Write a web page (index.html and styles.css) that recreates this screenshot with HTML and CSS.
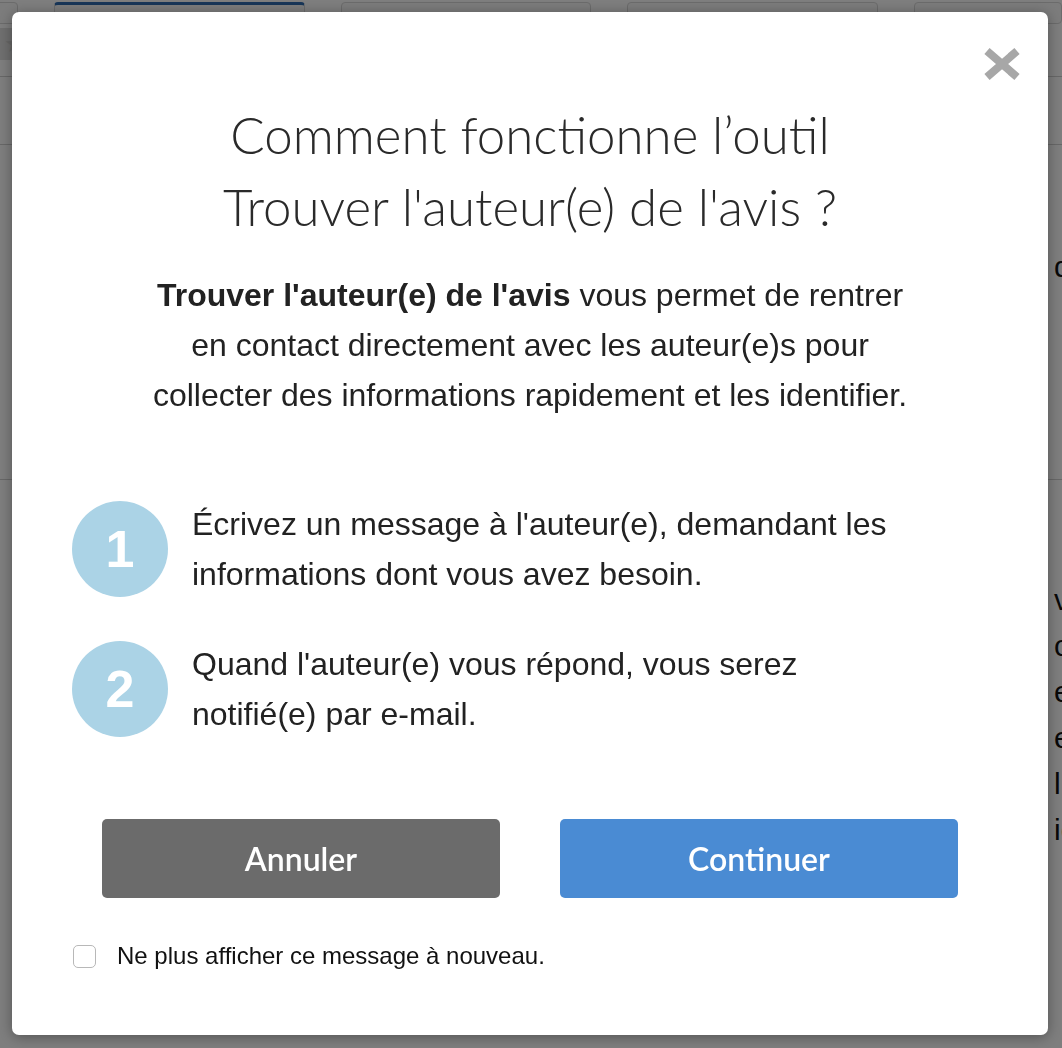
FILE: index.html
```html
<!DOCTYPE html>
<html lang="fr">
<head>
    <meta charset="UTF-8">
    <meta name="viewport" content="width=device-width, initial-scale=1.0">
    <title>Trouver l'auteur(e) de l'avis</title>
    <link rel="stylesheet" href="styles.css">
</head>
<body>
    <!-- page derriere la fenetre -->
    <div class="page">
        <div class="tabs">
            <div class="tab tab-small"></div>
            <div class="tab tab-active"></div>
            <div class="tab"></div>
            <div class="tab"></div>
            <div class="tab tab-small"></div>
        </div>
        <div class="page-row row-top"><span class="star">★</span></div>
        <div class="page-row row-sub"></div>
        <div class="page-row row-mid">
            <p class="side-text side-first">d</p>
        </div>
        <div class="page-row row-bottom">
            <p class="side-text">v</p>
            <p class="side-text">c</p>
            <p class="side-text">e</p>
            <p class="side-text">e</p>
            <p class="side-text">l</p>
            <p class="side-text">io</p>
        </div>
    </div>

    <div class="overlay">
        <div class="modal">
            <button class="close" aria-label="Fermer">
                <svg width="38" height="34" viewBox="0 0 38 34">
                    <path d="M4 4 L34 30 M34 4 L4 30" stroke="#a7a7a7" stroke-width="8" fill="none"/>
                </svg>
            </button>

            <h1 class="modal-title">Comment fonctionne l’outil<br>Trouver l'auteur(e) de l'avis ?</h1>

            <p class="intro">
                <strong>Trouver l'auteur(e) de l'avis</strong> vous permet de rentrer<br>
                en contact directement avec les auteur(e)s pour<br>
                collecter des informations rapidement et les identifier.
            </p>

            <div class="steps">
                <div class="step">
                    <span class="step-num">1</span>
                    <p class="step-text">Écrivez un message à l'auteur(e), demandant les<br>informations dont vous avez besoin.</p>
                </div>
                <div class="step">
                    <span class="step-num">2</span>
                    <p class="step-text">Quand l'auteur(e) vous répond, vous serez<br>notifié(e) par e-mail.</p>
                </div>
            </div>

            <div class="actions">
                <button class="btn btn-cancel">Annuler</button>
                <button class="btn btn-continue">Continuer</button>
            </div>

            <label class="dont-show">
                <input type="checkbox">
                <span>Ne plus afficher ce message à nouveau.</span>
            </label>
        </div>
    </div>
</body>
</html>
```

FILE: styles.css
```css
body {
    margin: 0;
    padding: 0;
    height: 100vh;
    overflow: hidden;
    font-family: "Liberation Sans", Arial, sans-serif;
    background-color: #ffffff;
}

/* Page en arriere-plan */
.page {
    height: 100%;
    background-color: #fdfdfd;
}

.tabs {
    display: flex;
    gap: 36px;
    height: 30px;
    margin-left: -130px;
}

.tab {
    width: 256px;
    height: 20px;
    border: 1px solid #d6d6d6;
    border-radius: 4px;
    margin-top: 2px;
    background-color: #f8f8f8;
}

.tab-small {
    width: 150px;
}

.tab-active {
    border-top: 3px solid #2f6bb0;
}

.page-row {
    border-bottom: 1px solid #cfcfcf;
}

.row-top {
    height: 46px;
}

.star {
    display: inline-block;
    margin-top: -2px;
    font-size: 24px;
    color: #ccc;
    background-color: #dedede;
    padding: 2px 4px;
}

.row-sub {
    height: 67px;
}

.row-mid {
    height: 334px;
    overflow: hidden;
}

.row-bottom {
    border: none;
    padding-top: 97px;
}

.side-text {
    margin: 0 0 0 1054px;
    font-size: 30px;
    line-height: 46px;
    color: #111;
}

.side-first {
    margin-top: 99px;
}

/* Fenetre modale */
.overlay {
    position: fixed;
    inset: 0;
    background-color: rgba(0, 0, 0, 0.5);
}

.modal {
    position: relative;
    box-sizing: border-box;
    width: 1036px;
    height: 1023px;
    margin: 12px 0 0 12px;
    padding: 87px 60px 0;
    background-color: #ffffff;
    border-radius: 7px;
    box-shadow: 0 2px 14px rgba(0, 0, 0, 0.35);
}

.close {
    position: absolute;
    top: 35px;
    right: 27px;
    border: none;
    background: none;
    padding: 0;
    line-height: 0;
    cursor: pointer;
}

.modal-title {
    margin: 0;
    text-align: center;
    font-family: Lato, sans-serif;
    font-weight: 300;
    font-size: 51px;
    line-height: 72px;
    color: #2a2a2a;
}

.intro {
    margin: 27px 0 0;
    text-align: center;
    font-size: 32px;
    line-height: 50px;
    color: #222;
}

.steps {
    margin-top: 79px;
    display: flex;
    flex-direction: column;
    gap: 40px;
}

.step {
    display: flex;
    align-items: center;
    gap: 24px;
}

.step-num {
    flex: none;
    width: 96px;
    height: 96px;
    border-radius: 50%;
    background-color: #abd3e6;
    color: #ffffff;
    font-family: "Liberation Sans", Arial, sans-serif;
    font-weight: bold;
    font-size: 52px;
    display: flex;
    align-items: center;
    justify-content: center;
}

.step-text {
    margin: 0;
    font-size: 32px;
    line-height: 50px;
    color: #222;
}

.actions {
    margin-top: 80px;
    display: flex;
    justify-content: center;
    gap: 60px;
}

.btn {
    width: 398px;
    height: 79px;
    border: none;
    border-radius: 5px;
    color: #ffffff;
    font-family: Lato, sans-serif;
    font-weight: 600;
    font-size: 32px;
    cursor: pointer;
}

.btn-cancel {
    background-color: #6b6b6b;
}

.btn-continue {
    background-color: #4a8bd3;
}

.dont-show {
    margin-top: 44px;
    display: flex;
    align-items: center;
    gap: 21px;
    font-size: 24px;
    color: #111;
}

.dont-show input {
    margin: 0 0 0 1px;
    width: 23px;
    height: 23px;
    appearance: none;
    border: 1px solid #b8b8b8;
    border-radius: 5px;
    background-color: #ffffff;
}
```
